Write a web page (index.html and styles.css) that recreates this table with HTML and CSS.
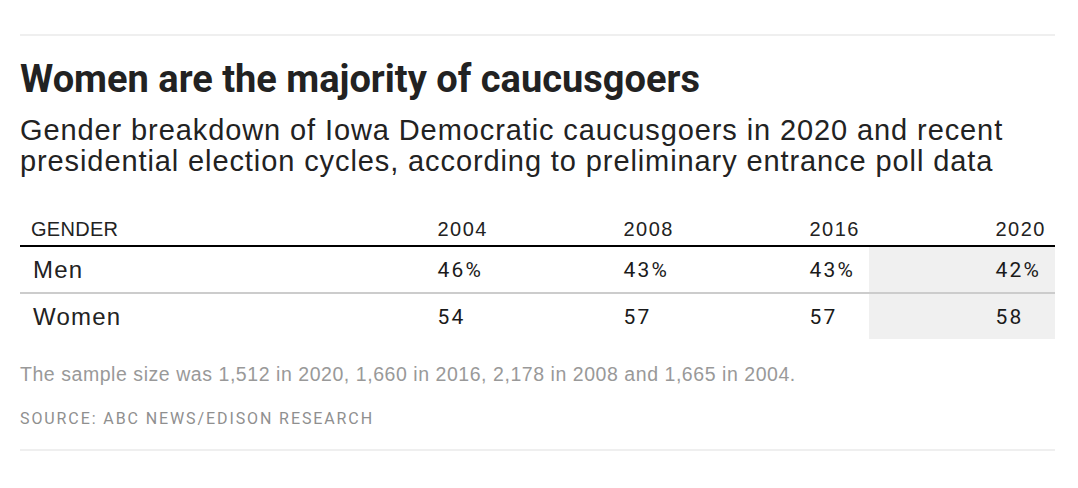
FILE: index.html
```html
<!DOCTYPE html>
<html lang="en">
<head>
<meta charset="utf-8">
<title>Women are the majority of caucusgoers</title>
<link rel="stylesheet" href="styles.css">
</head>
<body>
<div class="chart">
  <div class="rule"></div>
  <h1 class="title">Women are the majority of caucusgoers</h1>
  <p class="subtitle">Gender breakdown of Iowa Democratic caucusgoers in 2020 and recent presidential election cycles, according to preliminary entrance poll data</p>
  <table class="data">
    <colgroup>
      <col class="c-label">
      <col class="c-num">
      <col class="c-num">
      <col class="c-num">
      <col class="c-num">
    </colgroup>
    <thead>
      <tr>
        <th class="label">Gender</th>
        <th class="num">2004</th>
        <th class="num">2008</th>
        <th class="num">2016</th>
        <th class="num">2020</th>
      </tr>
    </thead>
    <tbody>
      <tr>
        <td class="label">Men</td>
        <td class="num">46<span class="pct">%</span></td>
        <td class="num">43<span class="pct">%</span></td>
        <td class="num">43<span class="pct">%</span></td>
        <td class="num hl">42<span class="pct">%</span></td>
      </tr>
      <tr>
        <td class="label">Women</td>
        <td class="num">54<span class="pct ghost">%</span></td>
        <td class="num">57<span class="pct ghost">%</span></td>
        <td class="num">57<span class="pct ghost">%</span></td>
        <td class="num hl">58<span class="pct ghost">%</span></td>
      </tr>
    </tbody>
  </table>
  <p class="note">The sample size was 1,512 in 2020, 1,660 in 2016, 2,178 in 2008 and 1,665 in 2004.</p>
  <p class="source">Source: ABC News/Edison Research</p>
  <div class="rule bottom"></div>
</div>
</body>
</html>
```

FILE: styles.css
```css
html, body {
  margin: 0;
  padding: 0;
  background: #ffffff;
}

.chart {
  width: 1035px;
  padding: 34px 0 0 20px;
  font-family: "Liberation Sans", Arial, sans-serif;
  color: #222222;
}

.rule {
  height: 2px;
  background: #efefef;
}

.title {
  margin: 21px 0 0;
  font-family: Roboto, "Liberation Sans", Arial, sans-serif;
  font-size: 38px;
  line-height: 44px;
  font-weight: 700;
  color: #222222;
}

.subtitle {
  margin: 14px 0 0;
  font-size: 29px;
  line-height: 31px;
  letter-spacing: 0.9px;
  font-weight: 400;
  color: #222222;
}

.data {
  width: 100%;
  margin-top: 40px;
  border-collapse: collapse;
  table-layout: fixed;
}

.c-label { width: 291px; }

.data th {
  font-size: 20px;
  font-weight: 400;
  line-height: 24px;
  letter-spacing: 0.3px;
  padding: 0 10px 4px;
  text-transform: uppercase;
  color: #222222;
  border-bottom: 2px solid #000000;
}

.data th.label { text-align: left; padding-left: 11px; }
.data th.num {
  text-align: right;
  letter-spacing: 1.5px;
  padding-right: 9px;
}

.data td {
  font-size: 24px;
  line-height: 24px;
  letter-spacing: 1.2px;
  padding: 11px 14px 10px;
  color: #222222;
}

.data tbody tr:first-child td {
  border-bottom: 2px solid #cccccc;
}

.data td.label {
  text-align: left;
  padding-left: 13px;
}

.data td.num {
  text-align: right;
  font-family: Roboto, "Liberation Sans", sans-serif;
  font-weight: 400;
  font-size: 21px;
  letter-spacing: 2.2px;
  color: #1a1a1a;
}

.data td.hl {
  background: #f0f0f0;
}

.ghost {
  visibility: hidden;
}

.note {
  margin: 24px 0 0;
  font-size: 19.5px;
  line-height: 22px;
  letter-spacing: 0.55px;
  color: #999999;
}

.source {
  margin: 24px 0 0;
  font-family: Roboto, "Liberation Sans", sans-serif;
  font-weight: 400;
  font-size: 16px;
  line-height: 20px;
  letter-spacing: 1.9px;
  text-transform: uppercase;
  color: #8f8f8f;
}

.rule.bottom {
  margin-top: 20px;
}
```
